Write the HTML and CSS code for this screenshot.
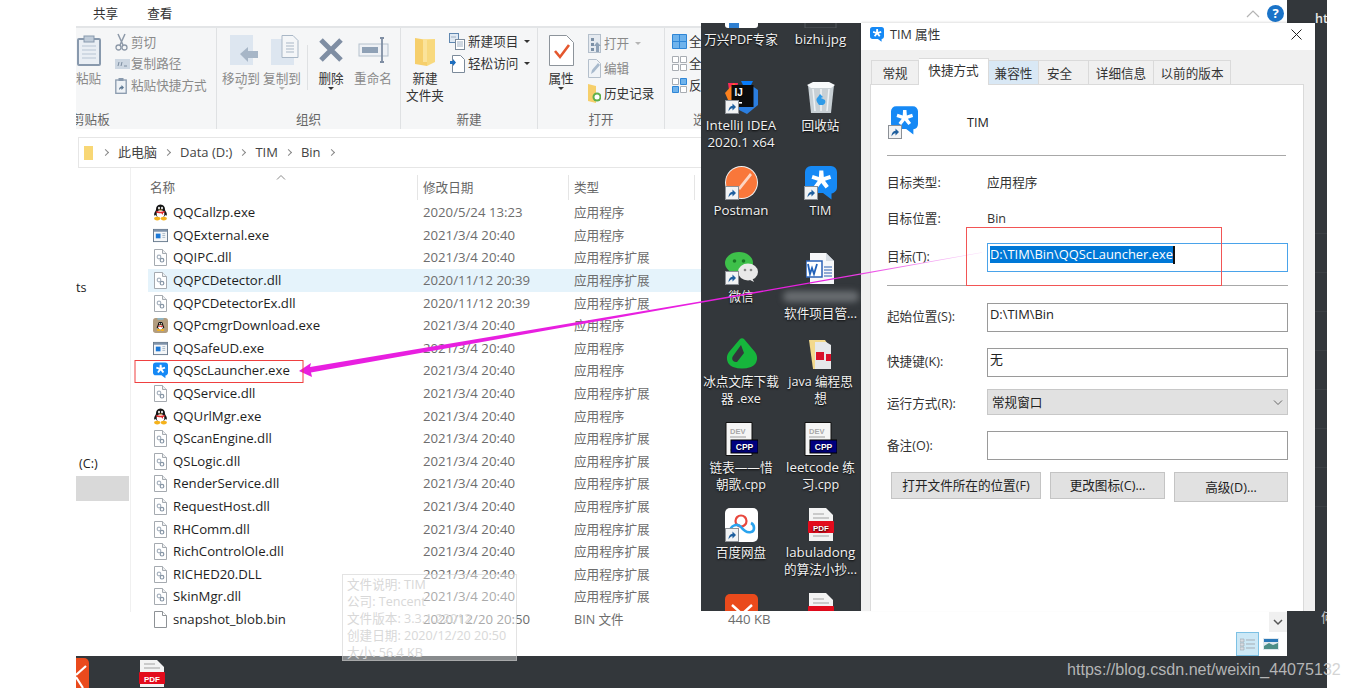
FILE: index.html
```html
<!DOCTYPE html>
<html lang="zh">
<head>
<meta charset="utf-8">
<title>TIM 属性</title>
<link rel="stylesheet" href="styles.css">
</head>
<body>
<svg class="defs" width="0" height="0" aria-hidden="true">
  <defs>
    <linearGradient id="fade" x1="0" y1="0" x2="1" y2="0">
      <stop offset="0" stop-color="#e81fe0"/>
      <stop offset=".78" stop-color="#e81fe0"/>
      <stop offset=".92" stop-color="#f29af0"/>
      <stop offset="1" stop-color="#fbe4fb"/>
    </linearGradient>
    <symbol id="penguin" viewBox="0 0 16 17">
      <path d="M8 0c3.300 0 4.800 2.300 4.800 5 0 1 .4 1.700 1.200 3 .9 1.500 1 3.300.4 3.800-.4.300-1-.3-1.300-.9-.4 1.100-1 1.900-1.600 2.400H4.500c-.6-.5-1.200-1.300-1.600-2.400-.3.600-.9 1.200-1.300.9-.6-.5-.5-2.300.4-3.800.8-1.300 1.200-2 1.200-3C3.200 2.300 4.700 0 8 0z" fill="#161616"/>
      <ellipse cx="8" cy="10.200" rx="4.100" ry="4.100" fill="#fff"/>
      <path d="M3.700 6.800c2.700 1.100 5.900 1.100 8.600 0l.4 1.300c-.7.400-1.400.6-2.100.8l.2 2.200-2-1.800c-1.200.1-2.500 0-3.600-.2-.9-.3-1.500-.6-2-1z" fill="#e3292b"/>
      <ellipse cx="4.500" cy="15" rx="3.300" ry="1.900" fill="#f5b21b"/>
      <ellipse cx="11.500" cy="15" rx="3.300" ry="1.900" fill="#f5b21b"/>
      <ellipse cx="6.400" cy="3.800" rx="1" ry="1.400" fill="#fff"/>
      <ellipse cx="9.600" cy="3.800" rx="1" ry="1.400" fill="#fff"/>
      <path d="M6 5.600h4L8 6.700z" fill="#f5b21b"/>
    </symbol>
    <symbol id="qqmgr" viewBox="0 0 17 17">
      <rect width="17" height="17" rx="3" fill="#b39d7f"/>
      <rect x="5" y="0" width="7" height="2" fill="#8fb6c6"/>
      <svg x="3.500" y="3" width="10" height="13" viewBox="0 0 16 17"><use href="#penguin"/></svg>
    </symbol>
    <symbol id="exe" viewBox="0 0 16 14">
      <rect x=".5" y=".5" width="15" height="13" fill="#f4f6f8" stroke="#66788c"/>
      <rect x="1" y="1" width="14" height="2" fill="#7f93aa"/>
      <rect x="3" y="5" width="5" height="5" fill="#1c78d6"/>
      <path d="M10 5h3M10 7h3M10 9h3" stroke="#a8b6c6"/>
    </symbol>
    <symbol id="dll" viewBox="0 0 13 17">
      <path d="M.5.500h8l4 4v12h-12z" fill="#fff" stroke="#a5aab0"/>
      <path d="M8.500.500v4h4" fill="#eceef0" stroke="#a5aab0"/>
      <circle cx="5" cy="8" r="1.800" fill="none" stroke="#a9b4c0" stroke-width="1.200"/>
      <circle cx="8" cy="11.200" r="1.800" fill="none" stroke="#8796a6" stroke-width="1.200"/>
    </symbol>
    <symbol id="blank" viewBox="0 0 13 17">
      <path d="M.5.500h8l4 4v12h-12z" fill="#fff" stroke="#8e9296"/>
      <path d="M8.500.500v4h4" fill="#fff" stroke="#8e9296"/>
    </symbol>
    <symbol id="tim" viewBox="0 0 32 34">
      <path d="M6 0h20a6 6 0 0 1 6 6v15c0 3.500-2.200 6-5.500 6.400V33.500L18 27H6a6 6 0 0 1-6-6V6a6 6 0 0 1 6-6z" fill="#1689f5"/>
      <path d="M14.300 4.500h4l.5 6.500 6.200-2 1.200 3.800-6.200 2 3.800 5.200-3.200 2.400L16.300 17l-4.200 5.400-3.200-2.400 3.900-5.200-6.300-2 1.200-3.800 6.200 2z" fill="#fff"/>
    </symbol>
    <symbol id="link" viewBox="0 0 14 14">
      <rect x=".5" y=".5" width="13" height="13" fill="#f2f3f4" stroke="#8c9096"/>
      <path d="M3.500 11.500c0-3.500 1.500-5.500 4-5.800V3.500l3.500 3.500-3.500 3.500V8.200c-1.700.1-3 1.200-4 3.300z" fill="#1f5f9e"/>
    </symbol>
    <symbol id="pdf" viewBox="0 0 26 34">
      <path d="M1 0h17l7 7v26H1z" fill="#f3f3f3"/>
      <path d="M5 6h11M5 10h16M5 28h16" stroke="#bdbdbd" stroke-width="1.600"/>
      <rect x="0" y="13" width="26" height="12" rx="1" fill="#e30b1c"/>
    </symbol>
    <symbol id="dev" viewBox="0 0 33 34">
      <path d="M1 .5h26v33H1z" fill="#f5f5f5" stroke="#111"/>
      <path d="M5 15h16M5 28h16" stroke="#bbb" stroke-width="1.600"/>
      <rect x="6" y="18" width="27" height="13" fill="#00007f" stroke="#000"/>
    </symbol>
  </defs>
</svg>

<main class="canvas">
  <section class="explorer">
    <div class="tabs"><span class="tab-label">共享</span><span class="tab-label">查看</span>
      <span class="tab-spacer"></span>
      <svg class="collapse" width="14" height="8" viewBox="0 0 14 8"><path d="M1 7l6-6 6 6" fill="none" stroke="#b4b4b4" stroke-width="1.200"/></svg>
      <span class="help">?</span>
    </div>

    <div class="ribbon">
      <div class="group group-clip">
        <div class="group-body">
          <div class="big paste">
            <svg width="24" height="31" viewBox="0 0 24 31"><rect x="1" y="4" width="22" height="26" rx="1" fill="#e9eef4" stroke="#8899ad" stroke-width="2"/><rect x="7" y="1" width="10" height="6" fill="#c0ccd9" stroke="#8899ad"/><path d="M5 11h14M5 15h14M5 19h14M5 23h14" stroke="#b7c4d3"/></svg>
            <span class="big-label">粘贴</span>
          </div>
          <div class="small-col clip-col">
            <div class="small"><svg width="13" height="18" viewBox="0 0 13 18"><path d="M3 1l5 11M10 1L5 12" stroke="#8d99a8" stroke-width="1.500" fill="none"/><circle cx="3.500" cy="14.500" r="2.500" fill="none" stroke="#8d99a8" stroke-width="1.300"/><circle cx="9.500" cy="14.500" r="2.500" fill="none" stroke="#8d99a8" stroke-width="1.300"/></svg><span>剪切</span></div>
            <div class="small"><svg width="15" height="10" viewBox="0 0 15 10"><rect width="15" height="10" fill="#cdd7e2"/><path d="M3 7l1-4M6 7l1-4M9 7h3" stroke="#7c8da0"/></svg><span>复制路径</span></div>
            <div class="small"><svg width="12" height="16" viewBox="0 0 12 16"><rect x=".8" y="2" width="10.400" height="13.300" fill="#eef2f6" stroke="#8899ad" stroke-width="1.300"/><rect x="3.500" y="0" width="5" height="3" fill="#8899ad"/><path d="M4 12c0-2.500 1-3.500 2.500-3.600V7L9 9.500 6.500 12v-1.600c-1 0-1.800.6-2.500 1.600z" fill="#5d7893"/></svg><span>粘贴快捷方式</span></div>
          </div>
        </div>
        <div class="group-name name-clip">剪贴板</div>
      </div>

      <div class="group group-org">
        <div class="group-body org-body">
          <div class="big org-move">
            <svg width="28" height="30" viewBox="0 0 28 30"><rect x="0" y="0" width="23" height="30" fill="#dde6f0"/><path d="M10 19l8-7v4h10v7H18v4z" fill="#a7b6c7"/></svg>
            <span class="big-label">移动到</span><span class="caret light"></span>
          </div>
          <div class="big org-copy">
            <svg width="28" height="30" viewBox="0 0 28 30"><rect x="0" y="4" width="23" height="26" fill="#dde6f0"/><path d="M11 .500h11l5 5v17H11z" fill="#f4f6f8" stroke="#a9b7c6"/><path d="M15 8h8M15 11h8M15 14h8M15 17h8" stroke="#a9b7c6"/></svg>
            <span class="big-label">复制到</span><span class="caret light"></span>
          </div>
          <span class="vsep"></span>
          <div class="big org-del">
            <svg width="26" height="26" viewBox="0 0 26 26"><path d="M3 3l20 20M23 3L3 23" stroke="#7f8ea3" stroke-width="5"/></svg>
            <span class="big-label dark">删除</span><span class="caret"></span>
          </div>
          <div class="big org-ren">
            <svg width="31" height="26" viewBox="0 0 31 26"><rect x="1" y="7" width="29" height="12" fill="#eef1f5" stroke="#b6c1cd"/><rect x="4" y="10" width="16" height="6" fill="#8fa1b6"/><path d="M22 1h4M24 1v24M22 25h4" stroke="#7f8ea3" stroke-width="1.800" fill="none"/></svg>
            <span class="big-label">重命名</span>
          </div>
        </div>
        <div class="group-name">组织</div>
      </div>

      <div class="group group-new">
        <div class="group-body new-body">
          <div class="big new-folder">
            <svg width="21" height="29" viewBox="0 0 21 29"><path d="M0 1l12 2v26L0 27z" fill="#f6cf6b"/><path d="M8 2h12v23H8z" fill="#fbe39a"/><path d="M12 3l8-1v23l-8 4z" fill="#f8d97e"/></svg>
            <span class="big-label dark">新建<br>文件夹</span>
          </div>
          <div class="small-col new-col">
            <div class="small dark"><svg width="16" height="17" viewBox="0 0 16 17"><rect x=".5" y=".5" width="9" height="9" fill="#dfe9f3" stroke="#5f87b0"/><rect x="6.500" y="6.500" width="9" height="10" fill="#fff" stroke="#7b8a9a"/><path d="M2 4h5M8 9h6M8 11h6M8 13h6" stroke="#9fb0c2"/></svg><span>新建项目</span><i class="caret inline"></i></div>
            <div class="small dark"><svg width="16" height="18" viewBox="0 0 16 18"><path d="M3.500.500h8l4 4v13h-12z" fill="#fff" stroke="#7b8a9a"/><path d="M1 6h5v3H1z" fill="#1f6fbf"/><path d="M4 4l3 3.500L4 11" fill="#1f6fbf"/></svg><span>轻松访问</span><i class="caret inline"></i></div>
          </div>
        </div>
        <div class="group-name">新建</div>
      </div>

      <div class="group group-open">
        <div class="group-body open-body">
          <div class="big open-prop">
            <svg width="25" height="31" viewBox="0 0 25 31"><path d="M.5.500h17l7 7v23H.500z" fill="#fff" stroke="#8d949b"/><path d="M6 16l5 6 9-12" fill="none" stroke="#e4572e" stroke-width="2.600"/></svg>
            <span class="big-label dark">属性</span><span class="caret"></span>
          </div>
          <div class="small-col open-col">
            <div class="small"><svg width="13" height="19" viewBox="0 0 13 19"><rect x=".5" y=".5" width="12" height="18" fill="#e5eaf0" stroke="#b4bfcb"/><path d="M3 4h3v3H3zM3 9h3v3H3zM3 14h3v3H3z" fill="#7b8fa5"/><path d="M9 8l4 4h-2v6H8v-6H6z" fill="#8ea1b6"/></svg><span>打开</span><i class="caret inline light"></i></div>
            <div class="small"><svg width="13" height="19" viewBox="0 0 13 19"><path d="M.5.500h8l4 4v14H.5z" fill="#f1f4f7" stroke="#b4bfcb"/><path d="M3 15l1-4 6-7 2 2-6 7z" fill="#a8bacd"/></svg><span>编辑</span></div>
            <div class="small dark"><svg width="13" height="19" viewBox="0 0 13 19"><path d="M0 0l8 2v17l-8-2z" fill="#f6cf6b"/><circle cx="9" cy="13" r="4.500" fill="#5fb04a"/><circle cx="9" cy="13" r="2.500" fill="#fff"/></svg><span>历史记录</span></div>
          </div>
        </div>
        <div class="group-name">打开</div>
      </div>

      <div class="group group-select">
        <div class="group-body">
          <div class="small-col sel-col">
            <div class="small dark"><svg width="15" height="15" viewBox="0 0 15 15"><path d="M.5.500h14v14H.5zM.5 7.500h14M7.500.5v14" fill="#6fb3ec" stroke="#2f86d6"/></svg><span>全部选择</span></div>
            <div class="small dark"><svg width="15" height="15" viewBox="0 0 15 15"><path d="M.5.500h6v6h-6zM8.500.5h6v6h-6zM.5 8.500h6v6h-6zM8.500 8.500h6v6h-6z" fill="#fff" stroke="#a8adb3"/></svg><span>全部取消</span></div>
            <div class="small dark"><svg width="15" height="15" viewBox="0 0 15 15"><path d="M.5 8.500h6v6h-6zM8.500.5h6v6h-6z" fill="#6fb3ec" stroke="#2f86d6"/><path d="M.5.500h6v6h-6zM8.500 8.500h6v6h-6z" fill="#fff" stroke="#a8adb3"/></svg><span>反向选择</span></div>
          </div>
        </div>
        <div class="group-name name-sel">选择</div>
      </div>
    </div>

    <div class="address">
      <svg class="crumb-folder" width="9" height="14" viewBox="0 0 9 14"><path d="M0 0h9v14H0z" fill="#f8d775"/></svg>
      <i class="chev"></i><span>此电脑</span><i class="chev"></i><span>Data (D:)</span><i class="chev"></i><span>TIM</span><i class="chev"></i><span>Bin</span><i class="chev"></i>
    </div>

    <div class="content">
      <nav class="nav">
        <span class="nav-ts">ts</span>
        <span class="nav-c">(C:)</span>
        <span class="nav-sel"></span>
      </nav>
      <div class="list">
        <div class="list-head">
          <span class="h-name">名称<svg class="sort" width="10" height="5" viewBox="0 0 10 5"><path d="M1 4.500l4-4 4 4" fill="none" stroke="#8a8a8a"/></svg></span>
          <span class="h-date">修改日期</span>
          <span class="h-type">类型</span>
          <span class="h-size"></span>
        </div>
        <div class="row"><svg class="ic"><use href="#penguin"/></svg><span class="fn">QQCallzp.exe</span><span class="fd">2020/5/24 13:23</span><span class="ft">应用程序</span></div>
        <div class="row"><svg class="ic"><use href="#exe"/></svg><span class="fn">QQExternal.exe</span><span class="fd">2021/3/4 20:40</span><span class="ft">应用程序</span></div>
        <div class="row"><svg class="ic"><use href="#dll"/></svg><span class="fn">QQIPC.dll</span><span class="fd">2021/3/4 20:40</span><span class="ft">应用程序扩展</span></div>
        <div class="row hover"><svg class="ic"><use href="#dll"/></svg><span class="fn">QQPCDetector.dll</span><span class="fd">2020/11/12 20:39</span><span class="ft">应用程序扩展</span></div>
        <div class="row"><svg class="ic"><use href="#dll"/></svg><span class="fn">QQPCDetectorEx.dll</span><span class="fd">2020/11/12 20:39</span><span class="ft">应用程序扩展</span></div>
        <div class="row"><svg class="ic"><use href="#qqmgr"/></svg><span class="fn">QQPcmgrDownload.exe</span><span class="fd">2021/3/4 20:40</span><span class="ft">应用程序</span></div>
        <div class="row"><svg class="ic"><use href="#exe"/></svg><span class="fn">QQSafeUD.exe</span><span class="fd">2021/3/4 20:40</span><span class="ft">应用程序</span></div>
        <div class="row"><svg class="ic"><use href="#tim"/></svg><span class="fn">QQScLauncher.exe</span><span class="fd">2021/3/4 20:40</span><span class="ft">应用程序</span></div>
        <div class="row"><svg class="ic"><use href="#dll"/></svg><span class="fn">QQService.dll</span><span class="fd">2021/3/4 20:40</span><span class="ft">应用程序扩展</span></div>
        <div class="row"><svg class="ic"><use href="#penguin"/></svg><span class="fn">QQUrlMgr.exe</span><span class="fd">2021/3/4 20:40</span><span class="ft">应用程序</span></div>
        <div class="row"><svg class="ic"><use href="#dll"/></svg><span class="fn">QScanEngine.dll</span><span class="fd">2021/3/4 20:40</span><span class="ft">应用程序扩展</span></div>
        <div class="row"><svg class="ic"><use href="#dll"/></svg><span class="fn">QSLogic.dll</span><span class="fd">2021/3/4 20:40</span><span class="ft">应用程序扩展</span></div>
        <div class="row"><svg class="ic"><use href="#dll"/></svg><span class="fn">RenderService.dll</span><span class="fd">2021/3/4 20:40</span><span class="ft">应用程序扩展</span></div>
        <div class="row"><svg class="ic"><use href="#dll"/></svg><span class="fn">RequestHost.dll</span><span class="fd">2021/3/4 20:40</span><span class="ft">应用程序扩展</span></div>
        <div class="row"><svg class="ic"><use href="#dll"/></svg><span class="fn">RHComm.dll</span><span class="fd">2021/3/4 20:40</span><span class="ft">应用程序扩展</span></div>
        <div class="row"><svg class="ic"><use href="#dll"/></svg><span class="fn">RichControlOle.dll</span><span class="fd">2021/3/4 20:40</span><span class="ft">应用程序扩展</span></div>
        <div class="row"><svg class="ic"><use href="#dll"/></svg><span class="fn">RICHED20.DLL</span><span class="fd">2021/3/4 20:40</span><span class="ft">应用程序扩展</span></div>
        <div class="row"><svg class="ic"><use href="#dll"/></svg><span class="fn">SkinMgr.dll</span><span class="fd">2021/3/4 20:40</span><span class="ft">应用程序扩展</span></div>
        <div class="row"><svg class="ic"><use href="#blank"/></svg><span class="fn">snapshot_blob.bin</span><span class="fd">2020/12/20 20:50</span><span class="ft">BIN 文件</span><span class="fs">440 KB</span></div>
      </div>
    </div>

    <div class="views">
      <div class="scroll-down"><svg width="10" height="7" viewBox="0 0 10 7"><path d="M1 1l4 4 4-4" fill="none" stroke="#555" stroke-width="1.500"/></svg></div>
      <div class="view-btns">
        <span class="view on"><svg width="16" height="13" viewBox="0 0 16 13"><path d="M0 1h4v3H0zM0 5h4v3H0zM0 9h4v3H0z" fill="#d7dce2" stroke="#9aa4ae" stroke-width=".6"/><path d="M6 2h9M6 6h9M6 10h9" stroke="#a5adb5"/></svg></span>
        <span class="view pic"><svg width="16" height="12" viewBox="0 0 16 12"><rect width="16" height="12" fill="#dfe8ee"/><path d="M1 8l5-3 4 2 5-2v6H1z" fill="#4d8e87"/><rect x="1" y="1" width="14" height="3" fill="#2a78b8"/></svg></span>
      </div>
    </div>
  </section>

  <aside class="strip">
    <span class="strip-ht">ht</span>
    <span class="strip-he">何</span>
  </aside>

  <footer class="taskbar">
    <svg class="bar-orange" width="13" height="30" viewBox="0 0 13 30"><path d="M0 0h8a5 5 0 0 1 5 5v25H0z" fill="#ea4a1c"/><path d="M0 17L10 8M0 19l7 11" fill="none" stroke="#fff" stroke-width="2.200"/></svg>
    <svg class="bar-pdf" width="26" height="27" viewBox="0 0 26 27"><path d="M1 0h17l7 7v20H1z" fill="#f3f3f3"/><path d="M5 4h11M5 8h16" stroke="#bdbdbd" stroke-width="1.500"/><rect x="0" y="12" width="26" height="12" rx="1" fill="#e30b1c"/><text x="13" y="21.500" class="pdf-text">PDF</text></svg>
  </footer>

  <div class="tooltip">
    <div>文件说明: TIM</div>
    <div>公司: Tencent</div>
    <div>文件版本: 3.3.1.22012</div>
    <div>创建日期: 2020/12/20 20:50</div>
    <div>大小: 56.4 KB</div>
  </div>

  <section class="desktop">
    <div class="desk-grid">
      <div class="dk"><span class="dk-ic"><svg width="33" height="33" viewBox="0 0 33 33"><rect width="33" height="33" fill="#fff" rx="3"/><rect y="26" x="4" width="10" height="7" fill="#2f7fd0"/></svg></span><span class="dk-t">万兴PDF专家</span></div>
      <div class="dk"><span class="dk-ic"><svg width="33" height="33" viewBox="0 0 33 33"><rect x="1" y="0" width="31" height="33" fill="none" stroke="#55595e"/></svg></span><span class="dk-t lat">bizhi.jpg</span></div>

      <div class="dk"><span class="dk-ic"><svg width="33" height="33" viewBox="0 0 33 33"><path d="M3 2h10l-6 28z" fill="#fe2857"/><path d="M0 12l9-10 6 12-8 14z" fill="#fc801d"/><path d="M20 0l13 9v15L22 33l-10-5z" fill="#2b7ee0"/><path d="M16 0h12l-6 12z" fill="#087cfa"/><rect x="6.500" y="4" width="22" height="22" fill="#0b0b0b"/><text x="9.500" y="15" class="ij">IJ</text><rect x="9" y="21" width="8" height="1.600" fill="#fff"/></svg><svg class="badge"><use href="#link"/></svg></span><span class="dk-t lat">IntelliJ IDEA 2020.1 x64</span></div>
      <div class="dk"><span class="dk-ic"><svg width="28" height="33" viewBox="0 0 28 33"><path d="M1 4h26l-3 28H4z" fill="#d5dde3" opacity=".92"/><path d="M6 8l2 22M14 8v22M22 8l-2 22" stroke="#eef2f5" stroke-width="1.500"/><path d="M0 4l6-3h16l6 3-4 3H4z" fill="#f8fafb"/><path d="M10 21a4 4 0 0 1 1-5l2-3 3 3-2 1 4 2a4 4 0 0 1-2 5h-4z" fill="#2f9be8"/></svg></span><span class="dk-t">回收站</span></div>

      <div class="dk"><span class="dk-ic"><svg width="33" height="33" viewBox="0 0 33 33"><circle cx="16.500" cy="16.500" r="16.500" fill="#f2f2f2"/><circle cx="16.500" cy="16.500" r="15.500" fill="#f9773a"/><path d="M13 22l12-15 2 2-12 15z" fill="#fff" opacity=".7"/></svg><svg class="badge"><use href="#link"/></svg></span><span class="dk-t lat">Postman</span></div>
      <div class="dk"><span class="dk-ic"><svg class="dk-tim"><use href="#tim"/></svg><svg class="badge"><use href="#link"/></svg></span><span class="dk-t">TIM</span></div>

      <div class="dk"><span class="dk-ic"><svg width="33" height="33" viewBox="0 0 33 33"><ellipse cx="14" cy="11" rx="14" ry="11" fill="#3ec04a"/><path d="M5 18l-1 6 7-3z" fill="#3ec04a"/><circle cx="9.500" cy="9" r="1.800" fill="#1a7a26"/><circle cx="18.500" cy="9" r="1.800" fill="#1a7a26"/><ellipse cx="23" cy="20" rx="10" ry="8.500" fill="#e9e9e9"/><path d="M27 26l2 4-6-3z" fill="#e9e9e9"/><circle cx="20" cy="18" r="1.300" fill="#888"/><circle cx="26" cy="18" r="1.300" fill="#888"/></svg><svg class="badge"><use href="#link"/></svg></span><span class="dk-t">微信</span></div>
      <div class="dk"><span class="dk-ic"><svg width="29" height="31" viewBox="0 0 29 31"><path d="M4 0h16l8 8v23H4z" fill="#f6f7f9"/><path d="M20 0v8h8" fill="#d7dde4"/><path d="M18 14h8M18 17h8M18 20h8M18 23h8" stroke="#2b5fb0"/><rect x="0" y="8" width="16" height="16" fill="#fff" stroke="#2b62b6" stroke-width="1.500"/><path d="M2 11l2 10 2-6 2 6 3-10" fill="none" stroke="#2060b8" stroke-width="1.800"/></svg></span><span class="dk-t"><span class="blur-name"></span>软件项目管...</span></div>

      <div class="dk"><span class="dk-ic"><svg width="33" height="32" viewBox="0 0 33 32"><path d="M15 1L4 14C0 19 2 27 8 29c6 2 12 2 18 0 6-2 8-10 4-15L19 1c-1-1-3-1-4 0zm1 6L8 18c-2 3 0 6 3 6h1l7-9-3-8z" fill="#16b53c" fill-rule="evenodd"/></svg></span><span class="dk-t">冰点文库下载器 .exe</span></div>
      <div class="dk"><span class="dk-ic"><svg width="24" height="30" viewBox="0 0 24 30"><path d="M0 1h16l2 3v26H4z" fill="#f3d98c"/><path d="M6 3h11l5 3v24H6z" fill="#e6e8ea"/><rect x="7" y="13" width="8" height="8" fill="#d8112b"/><rect x="17" y="15" width="5" height="7" fill="#d8112b"/></svg></span><span class="dk-t">java 编程思想</span></div>

      <div class="dk"><span class="dk-ic"><svg width="33" height="34" viewBox="0 0 33 34"><use href="#dev"/><text x="5" y="12" class="devt">DEV</text><text x="19.500" y="28" class="cpp">CPP</text></svg></span><span class="dk-t">链表——惜<br>朝歌.cpp</span></div>
      <div class="dk"><span class="dk-ic"><svg width="33" height="34" viewBox="0 0 33 34"><use href="#dev"/><text x="5" y="12" class="devt">DEV</text><text x="19.500" y="28" class="cpp">CPP</text></svg></span><span class="dk-t"><span class="lat">leetcode</span> 练<br>习.cpp</span></div>

      <div class="dk"><span class="dk-ic"><svg width="33" height="34" viewBox="0 0 33 34"><rect width="33" height="34" rx="5" fill="#fff"/><circle cx="16" cy="13" r="5.500" fill="none" stroke="#e8483e" stroke-width="2.200"/><path d="M5 24c0-7 8-9 11-5 3 4 6 6 10 5 4-1 4-7 0-9" fill="none" stroke="#2aa3ee" stroke-width="2.600"/></svg><svg class="badge"><use href="#link"/></svg></span><span class="dk-t">百度网盘</span></div>
      <div class="dk"><span class="dk-ic"><svg width="26" height="34" viewBox="0 0 26 34"><use href="#pdf"/><text x="13" y="22.500" class="pdf-text">PDF</text></svg></span><span class="dk-t"><span class="lat">labuladong</span> 的算法小抄...</span></div>

      <div class="dk"><span class="dk-ic"><svg width="33" height="33" viewBox="0 0 33 33"><rect width="33" height="33" rx="5" fill="#ea4a1c"/><path d="M7 11l10 9 10-9" fill="none" stroke="#fff" stroke-width="2.500"/></svg></span></div>
      <div class="dk"><span class="dk-ic"><svg width="26" height="34" viewBox="0 0 26 34"><use href="#pdf"/><text x="13" y="22.500" class="pdf-text">PDF</text></svg></span></div>
    </div>
  </section>

  <section class="dialog">
    <header class="dlg-title">
      <svg class="dlg-ic"><use href="#tim"/></svg>
      <span>TIM 属性</span>
      <svg class="dlg-close" width="11" height="11" viewBox="0 0 11 11"><path d="M.5.500l10 10M10.500.500l-10 10" stroke="#222" stroke-width="1"/></svg>
    </header>
    <div class="dlg-tabs">
      <span class="dtab t1">常规</span>
      <span class="dtab active">快捷方式</span>
      <span class="dtab hov">兼容性</span>
      <span class="dtab t4">安全</span>
      <span class="dtab t5">详细信息</span>
      <span class="dtab t6">以前的版本</span>
    </div>
    <div class="panel">
      <div class="p-head">
        <span class="p-icon"><svg class="p-tim"><use href="#tim"/></svg><svg class="badge p-badge"><use href="#link"/></svg></span>
        <span>TIM</span>
      </div>
      <hr class="rule short">
      <div class="f-row info first"><label>目标类型:</label><span>应用程序</span></div>
      <div class="f-row info"><label>目标位置:</label><span>Bin</span></div>
      <div class="f-row target"><label>目标(T):</label><div class="input focus"><span class="sel">D:\TIM\Bin\QQScLauncher.exe</span><i class="cursor"></i></div></div>
      <hr class="rule r2">
      <div class="f-row start"><label>起始位置(S):</label><div class="input">D:\TIM\Bin</div></div>
      <div class="f-row key"><label>快捷键(K):</label><div class="input">无</div></div>
      <div class="f-row run"><label>运行方式(R):</label><div class="select"><span>常规窗口</span><svg width="10" height="6" viewBox="0 0 10 6"><path d="M1 .5l4 4 4-4" fill="none" stroke="#666"/></svg></div></div>
      <div class="f-row note"><label>备注(O):</label><div class="input"></div></div>
      <div class="btns">
        <button class="btn b1">打开文件所在的位置(F)</button>
        <button class="btn b2">更改图标(C)...</button>
        <button class="btn b3">高级(D)...</button>
      </div>
    </div>
  </section>

  <svg class="annot" width="1349" height="688" viewBox="0 0 1349 688" aria-hidden="true">
    <polygon points="299,371 311,363 310,367 700,301.500 860,273.500 982,252.300 982,252.700 860,274.800 700,303 311,372.500 312,377" fill="url(#fade)"/>
    <rect x="135" y="360.500" width="168" height="22" fill="none" stroke="#ef4040"/>
    <rect x="966.500" y="227.500" width="255" height="58" fill="none" stroke="#f25555"/>
  </svg>

  <div class="watermark">https://blog.csdn.net/weixin_44075132</div>
</main>
</body>
</html>
```
FILE: styles.css
```css
* { box-sizing: border-box; }
html, body { margin: 0; padding: 0; background: #fff; }
body {
  width: 1349px; height: 688px; overflow: hidden;
  font-family: "Open Sans", "Noto Sans CJK SC", sans-serif;
  font-size: 12.6px; line-height: 17px; color: #222;
}
.defs { position: absolute; }
.canvas { position: relative; width: 1349px; height: 688px; overflow: hidden; }

/* explorer window */
.explorer { position: absolute; left: 76px; top: 0; width: 1211px; height: 656px; background: #fff; display: flex; flex-direction: column; overflow: hidden; }
.tabs { height: 28px; display: flex; align-items: center; gap: 29px; padding: 1px 3px 0 17px; border-bottom: 2px solid #e3e5e7; color: #333; }
.tab-spacer { flex: 1; }
.collapse { margin-right: -22px; }
.help { width: 17px; height: 17px; border-radius: 50%; background: #1a73c8; color: #fff; font-weight: 700; font-size: 13px; line-height: 17px; text-align: center; margin-top: -1px; }

.ribbon { height: 101px; background: #f5f6f7; display: flex; color: #8a8a8a; }
.group { display: flex; flex-direction: column; border-right: 1px solid #dfe1e3; overflow: hidden; flex: none; }
.group-body { height: 82.5px; display: flex; position: relative; flex: none; }
.group-name { text-align: center; line-height: 17px; height: 17px; color: #666; }
.group-clip { width: 141px; }
.group-org { width: 184px; }
.group-new { width: 137px; }
.group-open { width: 127px; }
.group-select { width: 60px; border-right: 0; }
.name-clip { text-align: left; margin-left: -4px; }
.name-sel { text-align: left; padding-left: 28px; }
.big { display: grid; grid-template-rows: 34.500px 17px auto; grid-template-columns: 100%; justify-items: center; padding-top: 7px; height: 82px; flex: none; }
.big-label { line-height: 17px; white-space: nowrap; text-align: center; }
.big .caret { margin-top: 0; }
.dark { color: #333; }
.paste { width: 25px; }
.small-col { display: flex; flex-direction: column; gap: 5px; padding-top: 5px; }
.small { display: flex; align-items: center; gap: 3px; height: 17px; white-space: nowrap; }
.small svg { flex: none; }
.clip-col { margin-left: 14px; }
.clip-col .small { display: grid; grid-template-columns: 16px auto; gap: 0; }
.caret { display: block; width: 0; height: 0; border: 3px solid transparent; border-top: 3px solid #333; border-bottom: 0; }
.caret.light { border-top-color: #b5b5b5; }
.caret.inline { display: inline-block; margin: 0 0 0 3px; }
.org-body { padding-left: 5px; }
.org-move { width: 38px; }
.org-copy { width: 38px; margin-left: 3px; }
.org-move svg, .org-copy svg { margin-left: 6px; }
.vsep { width: 1px; height: 45px; background: #dfe1e3; margin: 17px 0 0 6px; flex: none; }
.org-del { width: 26px; margin-left: 10px; }
.org-ren { width: 38px; margin-left: 10px; }
.org-del svg, .org-ren svg, .new-folder svg { margin-top: 2px; }
.new-body { padding-left: 5px; }
.new-folder { width: 38px; }
.new-col { margin-left: 5px; }
.open-body { padding-left: 10px; }
.open-prop { width: 26px; }
.open-col { margin-left: 14px; gap: 7px; padding-top: 6px; }
.open-col .small { height: 18px; }
.sel-col { margin-left: 7px; }
.sel-col .small { gap: 2px; }

/* address bar */
.address { height: 31px; margin: 8px 0 0 2px; border: 1px solid #e6e6e6; display: flex; align-items: center; padding-left: 5px; color: #444; flex: none; font-size: 13px; }
.crumb-folder { flex: none; margin-right: 2px; }
.chev { width: 5px; height: 5px; border-top: 1px solid #888; border-right: 1px solid #888; transform: rotate(45deg); flex: none; margin: 0 10px 0 8px; }

/* list */
.content { flex: 1; display: flex; min-height: 0; }
.nav { width: 55px; border-right: 1px solid #f0f0f0; position: relative; flex: none; }
.nav-ts { position: absolute; left: 0; top: 111px; }
.nav-c { position: absolute; left: 3px; top: 287px; }
.nav-sel { position: absolute; left: 0; top: 308px; width: 53px; height: 25px; background: #d9d9d9; }
.list { flex: 1; padding-top: 7px; }
.list-head { display: flex; height: 25px; color: #666; }
.list-head > span { display: flex; align-items: center; border-right: 1px solid #e5e5e5; padding-left: 5px; flex: none; position: relative; }
.h-name { width: 287px; padding-left: 19px !important; }
.h-date { width: 151px; }
.h-type { width: 126px; }
.h-size { width: 100px; }
.sort { position: absolute; left: 145px; top: 0; }
.row { display: flex; align-items: center; height: 22.6px; margin-left: 17px; white-space: nowrap; }
.list-head + .row { margin-top: 1.400px; }
.row.hover { background: #e5f3fb; }
.ic { width: 15px; height: 17px; flex: none; margin-left: 5px; }
.fn { width: 250px; margin-left: 5px; color: #1e1e1e; font-size: 13.200px; }
.fd { width: 151px; color: #6d6d6d; font-size: 13.200px; }
.ft { width: 154px; color: #6d6d6d; }
.fs { color: #6d6d6d; font-size: 13.200px; }

.views { height: 44px; flex: none; display: flex; flex-direction: column; align-items: flex-end; }
.scroll-down { width: 18px; height: 20px; background: #f0f0f0; display: flex; align-items: center; justify-content: center; }
.view-btns { display: flex; gap: 4px; padding-right: 8px; }
.view { width: 23px; height: 24px; display: flex; align-items: center; justify-content: center; }
.view.pic { width: 16px; }
.view.on { background: #cce8f6; border: 1px solid #7dc1e4; }

/* right strip + taskbar */
.strip { position: absolute; left: 1287px; top: 0; width: 40px; height: 656px; background: #33373b; overflow: hidden; color: #e8e8e8; }
.strip::before { content: ""; position: absolute; left: 0; top: 195px; width: 100%; height: 312px; background: repeating-linear-gradient(to bottom, transparent 0 38px, #3c4044 38px 39px); }
.strip-ht { position: absolute; left: 28px; top: 10px; font-weight: 600; }
.strip-he { position: absolute; left: 34px; top: 609px; color: #c9c9c9; }
.taskbar { position: absolute; left: 76px; top: 656px; width: 1251px; height: 32px; background: #33373b; }
.bar-orange { position: absolute; left: 0; top: 2px; }
.bar-pdf { position: absolute; left: 63px; top: 4px; }
.pdf-text { font: 700 8px "Liberation Sans", sans-serif; fill: #fff; text-anchor: middle; }
.tooltip { position: absolute; left: 342px; top: 574px; width: 175px; height: 87px; padding: 1px 4px; background: rgba(255,255,255,.42); border: 1px solid rgba(200,200,200,.5); color: #d8d8d8; line-height: 17px; white-space: nowrap; overflow: hidden; }

/* desktop strip */
.desktop { position: absolute; left: 701px; top: 23px; width: 160px; height: 588px; background: #33373b; overflow: hidden; }
.desk-grid { display: grid; grid-template-columns: 80px 79px; grid-auto-rows: 85.500px; margin-top: -28.500px; }
.dk { display: flex; flex-direction: column; align-items: center; text-align: center; color: #f2f2f2; text-shadow: 0 1px 2px #000; padding: 0 1px; }
.dk-ic { position: relative; height: 34px; display: flex; align-items: center; justify-content: center; margin-bottom: 2.500px; width: 33px; flex: none; }
.dk-t { line-height: 17px; word-break: break-all; }
.lat { font-size: 13.300px; }
.badge { position: absolute; left: 0; bottom: 0; width: 14px; height: 14px; }
.dk-tim { width: 32px; height: 34px; }
.blur-name { display: block; width: 76px; height: 11px; margin: 3px auto; border-radius: 6px; background: #696d71; filter: blur(3px); }
.ij { font: 700 10px "Liberation Sans", sans-serif; fill: #fff; }
.cpp { font: 700 8.500px "Liberation Sans", sans-serif; fill: #fff; text-anchor: middle; }
.devt { font: 700 7.500px "Liberation Sans", sans-serif; fill: #a8a8a8; text-shadow: none; }

/* properties dialog */
.dialog { position: absolute; left: 861px; top: 23px; width: 454px; height: 588px; background: #f0f0f0; display: flex; flex-direction: column; box-shadow: 0 -1px 2px rgba(0,0,0,.12); }
.dlg-title { height: 27px; flex: none; background: #fff; display: flex; align-items: center; gap: 6px; padding: 0 13px 5px 9px; color: #333; position: relative; }
.dlg-ic { width: 14px; height: 15px; flex: none; }
.dlg-close { margin-left: auto; }
.dlg-tabs { height: 34px; flex: none; display: flex; align-items: flex-end; padding-left: 10px; position: relative; z-index: 1; }
.dtab { height: 24px; border: 1px solid #dadada; border-bottom: 0; border-left: 0; background: #f0f0f0; display: flex; align-items: center; justify-content: center; color: #333; flex: none; }
.t1 { width: 48px; border-left: 1px solid #dadada; padding-top: 2px; }
.active { width: 70px; height: 27px; background: #fff; margin-bottom: -1px; padding-bottom: 3px; }
.hov { width: 50px; background: #d9e8f5; padding-top: 2px; }
.t4 { width: 50px; padding-right: 8px; padding-top: 2px; }
.t5 { width: 65px; padding-top: 2px; }
.t6 { width: 77px; padding-top: 2px; }
.panel { flex: 1; margin: 0 11px 0 9px; background: #fff; border: 1px solid #dadada; border-bottom: 0; padding: 0 15px 0 16px; display: flex; flex-direction: column; }
.p-head { height: 70px; flex: none; display: flex; align-items: center; padding: 4px 0 0 2px; }
.p-icon { position: relative; width: 29px; height: 34px; margin-right: 49px; flex: none; margin-top: -2px; }
.p-tim { position: absolute; left: 2px; top: 0; width: 27px; height: 33px; }
.p-badge { left: -1px; bottom: -1px; }
.rule { border: 0; border-top: 1px solid #a8a8a8; margin: 0; flex: none; }
.rule.short { margin-right: 2px; }
.f-row { display: flex; align-items: center; flex: none; }
.f-row label { width: 100px; flex: none; color: #333; }
.info { height: 36px; color: #333; }
.info.first { margin-top: 8px; }
.target { margin-top: 7px; }
.target label { margin-bottom: 3px; }
.r2 { margin-top: 13px; }
.start { margin-top: 17px; }
.start label, .key label { margin-bottom: 2px; }
.key { margin-top: 16px; }
.run { margin-top: 12px; }
.run label { margin-top: 3px; }
.note { margin-top: 16px; }
.input { width: 301px; height: 29px; background: #fff; border: 1px solid #9a9a9a; padding: 2px 2px; color: #222; line-height: 17px; display: flex; align-items: flex-start; font-size: 12.900px; }
.input.focus { border-color: #4aa3ea; }
.sel { background: #0078d7; color: #fff; line-height: 17px; white-space: nowrap; }
.cursor { width: 2px; height: 18px; background: #111; flex: none; }
.select { width: 301px; height: 26px; background: #e1e1e1; border: 1px solid #c8c8c8; display: flex; align-items: center; justify-content: space-between; padding: 1px 4px 0 4px; color: #222; }
.btns { display: flex; align-items: flex-start; gap: 9px; margin: 12px 0 0 4px; flex: none; }
.btn { font: inherit; color: #222; background: #e1e1e1; border: 1px solid #c4c4c4; padding: 0; height: 27px; }
.b1 { width: 150px; }
.b2 { width: 115px; }
.b3 { width: 114px; height: 30px; }

/* annotations */
.annot { position: absolute; left: 0; top: 0; pointer-events: none; }
.watermark { position: absolute; left: 1067px; top: 659px; font: 16.100px/20px "Liberation Sans", sans-serif; color: rgba(205,205,205,.85); white-space: nowrap; }
```
